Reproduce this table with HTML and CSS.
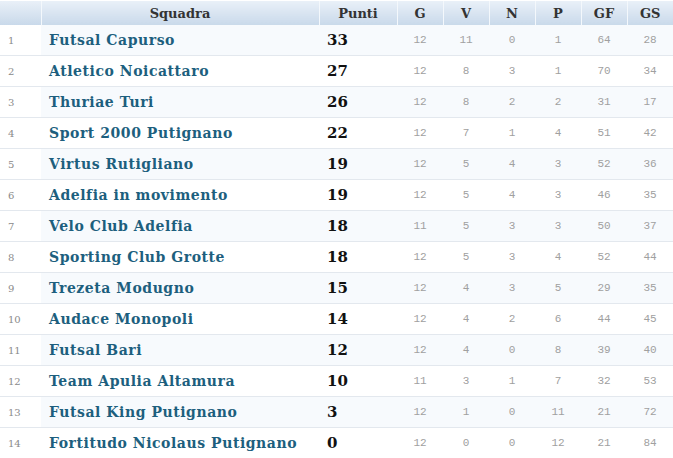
FILE: index.html
```html
<!DOCTYPE html>
<html>
<head>
<meta charset="utf-8">
<link rel="stylesheet" href="styles.css">
</head>
<body>
<table class="standings">
  <colgroup>
    <col class="c-pos"><col class="c-team"><col class="c-pts"><col class="c-n"><col class="c-n"><col class="c-n"><col class="c-n"><col class="c-n"><col class="c-n">
  </colgroup>
  <thead>
    <tr><th></th><th>Squadra</th><th>Punti</th><th>G</th><th>V</th><th>N</th><th>P</th><th>GF</th><th>GS</th></tr>
  </thead>
  <tbody>
    <tr><td class="pos">1</td><td class="team">Futsal Capurso</td><td class="pts">33</td><td>12</td><td>11</td><td>0</td><td>1</td><td>64</td><td>28</td></tr>
    <tr><td class="pos">2</td><td class="team">Atletico Noicattaro</td><td class="pts">27</td><td>12</td><td>8</td><td>3</td><td>1</td><td>70</td><td>34</td></tr>
    <tr><td class="pos">3</td><td class="team">Thuriae Turi</td><td class="pts">26</td><td>12</td><td>8</td><td>2</td><td>2</td><td>31</td><td>17</td></tr>
    <tr><td class="pos">4</td><td class="team">Sport 2000 Putignano</td><td class="pts">22</td><td>12</td><td>7</td><td>1</td><td>4</td><td>51</td><td>42</td></tr>
    <tr><td class="pos">5</td><td class="team">Virtus Rutigliano</td><td class="pts">19</td><td>12</td><td>5</td><td>4</td><td>3</td><td>52</td><td>36</td></tr>
    <tr><td class="pos">6</td><td class="team">Adelfia in movimento</td><td class="pts">19</td><td>12</td><td>5</td><td>4</td><td>3</td><td>46</td><td>35</td></tr>
    <tr><td class="pos">7</td><td class="team">Velo Club Adelfia</td><td class="pts">18</td><td>11</td><td>5</td><td>3</td><td>3</td><td>50</td><td>37</td></tr>
    <tr><td class="pos">8</td><td class="team">Sporting Club Grotte</td><td class="pts">18</td><td>12</td><td>5</td><td>3</td><td>4</td><td>52</td><td>44</td></tr>
    <tr><td class="pos">9</td><td class="team">Trezeta Modugno</td><td class="pts">15</td><td>12</td><td>4</td><td>3</td><td>5</td><td>29</td><td>35</td></tr>
    <tr><td class="pos">10</td><td class="team">Audace Monopoli</td><td class="pts">14</td><td>12</td><td>4</td><td>2</td><td>6</td><td>44</td><td>45</td></tr>
    <tr><td class="pos">11</td><td class="team">Futsal Bari</td><td class="pts">12</td><td>12</td><td>4</td><td>0</td><td>8</td><td>39</td><td>40</td></tr>
    <tr><td class="pos">12</td><td class="team">Team Apulia Altamura</td><td class="pts">10</td><td>11</td><td>3</td><td>1</td><td>7</td><td>32</td><td>53</td></tr>
    <tr><td class="pos">13</td><td class="team">Futsal King Putignano</td><td class="pts">3</td><td>12</td><td>1</td><td>0</td><td>11</td><td>21</td><td>72</td></tr>
    <tr><td class="pos">14</td><td class="team">Fortitudo Nicolaus Putignano</td><td class="pts">0</td><td>12</td><td>0</td><td>0</td><td>12</td><td>21</td><td>84</td></tr>
  </tbody>
</table>
</body>
</html>
```
FILE: styles.css
```css
html, body {
  margin: 0;
  padding: 0;
  background: #ffffff;
}
.standings {
  border-collapse: collapse;
  table-layout: fixed;
  width: 673px;
  margin-top: 1px;
  font-family: "DejaVu Serif", "Liberation Serif", serif;
}
.c-pos { width: 41px; }
.c-team { width: 278px; }
.c-pts { width: 78px; }
.c-n { width: 46px; }
.standings thead th {
  height: 24px;
  padding: 0;
  font-size: 13px;
  font-weight: bold;
  color: #333333;
  background: linear-gradient(#e9f0f8, #c9d9ea);
  border-left: 1px solid #f4f8fc;
  text-align: center;
}
.standings thead th:first-child { border-left: none; }
.standings tbody td {
  height: 30px;
  padding: 0;
  border-bottom: 1px solid #e3e8ee;
  color: #a0a0a0;
  text-align: center;
  font-family: "Liberation Mono", "DejaVu Sans Mono", monospace;
  font-size: 11px;
}
.standings tbody tr:nth-child(odd) td { background: #f7fafd; }
.standings tbody tr:nth-child(odd) td.pos { background: #ffffff; }
.standings tbody td.pos {
  text-align: left;
  padding-left: 8px;
  font-family: "DejaVu Serif", serif;
  font-size: 10px;
  color: #8a8a8a;
}
.standings tbody td.team {
  text-align: left;
  padding-left: 8px;
  font-family: "DejaVu Serif", serif;
  font-size: 14px;
  font-weight: 600;
  color: #1d5f7e;
  letter-spacing: 0.55px;
}
.standings tbody td.pts {
  text-align: left;
  padding-left: 8px;
  font-family: "DejaVu Serif", serif;
  font-size: 15px;
  font-weight: bold;
  color: #111111;
}
.standings tbody tr:last-child td { border-bottom: 1px solid #dfe4ea; }
```
